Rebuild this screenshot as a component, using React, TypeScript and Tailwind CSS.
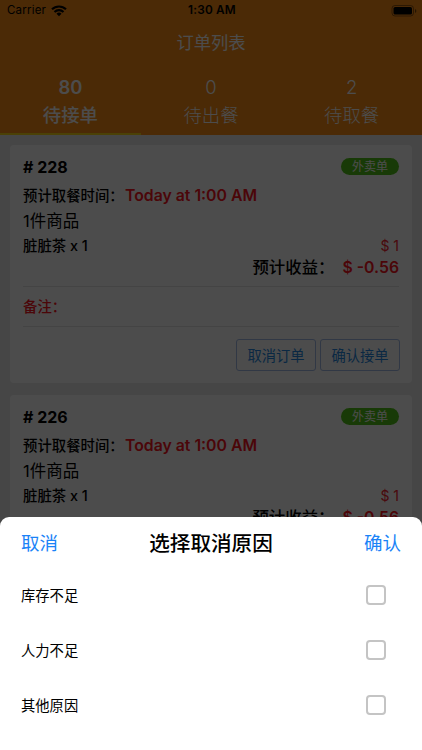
const tabs = [
  { count: 80, label: '待接单', active: true },
  { count: 0, label: '待出餐', active: false },
  { count: 2, label: '待取餐', active: false },
];

const reasons = ['库存不足', '人力不足', '其他原因'];

function StatusBar() {
  return (
    <div className="grid h-[22px] grid-cols-3 items-center pl-[7px] pr-[5px] text-[11.5px] text-black">
      <div className="flex items-center gap-[5px]">
        <span className="tracking-[0.2px]">Carrier</span>
        <svg width="16" height="12" viewBox="0 0 16 12" fill="none" stroke="currentColor" strokeWidth="2.1">
          <path d="M1 4.300a10 10 0 0 1 14 0" />
          <path d="M3.500 7a6.400 6.400 0 0 1 9 0" />
          <path d="M8 11.200 5.500 8.700a3.600 3.600 0 0 1 5 0z" fill="currentColor" stroke="none" />
        </svg>
      </div>
      <span className="text-center text-[11.8px] font-semibold tracking-[0.2px]">1:30 AM</span>
      <svg className="justify-self-end" width="26" height="12" viewBox="0 0 26 12">
        <rect x="1" y="0.5" width="21.5" height="10.5" rx="3" fill="none" stroke="#000" strokeOpacity="0.4" />
        <rect x="2.5" y="2" width="18.5" height="7.5" rx="1.6" fill="#000" />
        <path d="M24 4v4c1-.5 1.3-1.1 1.3-2S25 4.500 24 4z" fill="#000" fillOpacity="0.5" />
      </svg>
    </div>
  );
}

function OrderCard({ id }: { id: number }) {
  return (
    <section className="mx-[10px] mb-3 h-[238px] rounded-[4px] bg-white px-[13px] pt-[11px] text-black">
      <div className="flex h-[23px] items-center justify-between">
        <h2 className="pb-px text-[16px] font-bold"># {id}</h2>
        <span className="mb-[3px] flex h-[17px] w-[58px] items-center justify-center rounded-full bg-[#52c41a] pt-px text-[12px] text-white">
          外卖单
        </span>
      </div>
      <div className="flex h-[32px] items-center pt-px">
        <span className="w-[102px] whitespace-nowrap text-[14.4px] font-medium">预计取餐时间：</span>
        <span className="whitespace-nowrap text-[15.800px] font-semibold text-[#fa141e]">Today at 1:00 AM</span>
      </div>
      <div className="flex h-[21px] items-center text-[16.5px]">1件商品</div>
      <div className="flex h-[26px] items-center justify-between text-[14px]">
        <span className="pt-px text-[14.4px] font-medium">脏脏茶 x 1</span>
        <span className="text-[#f5222d]">$ 1</span>
      </div>
      <div className="flex h-[18px] items-center justify-end font-medium">
        <span className="w-[90px] whitespace-nowrap text-[16.4px]">预计收益：</span>
        <span className="pt-[2px] text-[15.800px] font-semibold text-[#fa141e]">$ -0.56</span>
      </div>
      <div className="mt-[10px] flex h-[41px] items-center border-y border-[#e4e4e4] pt-px text-[14.4px] font-medium text-[#fa141e]">
        备注：
      </div>
      <div className="-mr-px mt-3 flex justify-end gap-1 text-[14.3px] text-[#2688e0]">
        <button className="h-8 w-20 rounded-[3px] border border-[#a3bbe6] pt-px">取消订单</button>
        <button className="h-8 w-20 rounded-[3px] border border-[#a3bbe6] pt-px">确认接单</button>
      </div>
    </section>
  );
}

export default function App() {
  return (
    <div className="relative h-[750px] w-[422px] overflow-hidden bg-[#ececec] font-['Inter','Noto_Sans_CJK_SC',sans-serif]">
      <header className="h-[135px] bg-[#fa8c16]">
        <StatusBar />
        <h1 className="flex h-[42px] items-center justify-center text-[17.3px] text-white">订单列表</h1>
        <nav className="grid h-[71px] grid-cols-3 text-white">
          {tabs.map((tab) => (
            <div
              key={tab.label}
              className={`flex flex-col items-center border-b-2 pt-[9px] text-[18.4px] leading-[28px] ${
                tab.active ? 'border-[#fadb14] font-medium' : 'border-transparent font-light'
              }`}
            >
              <span className={tab.active ? 'font-semibold' : ''}>{tab.count}</span>
              <span>{tab.label}</span>
            </div>
          ))}
        </nav>
      </header>
      <main className="pt-[10px]">
        <OrderCard id={228} />
        <OrderCard id={226} />
      </main>

      <div className="absolute inset-0 bg-black/70" />
      <div className="absolute inset-x-0 bottom-0 h-[233px] rounded-t-[9px] bg-white">
        <div className="flex h-[51px] items-center justify-between px-[21px] pt-[2px]">
          <button className="text-[18.5px] text-[#1a83f7]">取消</button>
          <h2 className="pt-px text-[20.6px] font-medium text-black">选择取消原因</h2>
          <button className="text-[18.5px] text-[#1a83f7]">确认</button>
        </div>
        {reasons.map((reason) => (
          <label key={reason} className="flex h-[55px] items-center justify-between pl-[21px] pr-9 text-[14.3px] text-black">
            <span className="pt-px">{reason}</span>
            <span className="mb-px h-5 w-5 rounded-[4px] border-2 border-[#c4c4c4]" />
          </label>
        ))}
      </div>
    </div>
  );
}
